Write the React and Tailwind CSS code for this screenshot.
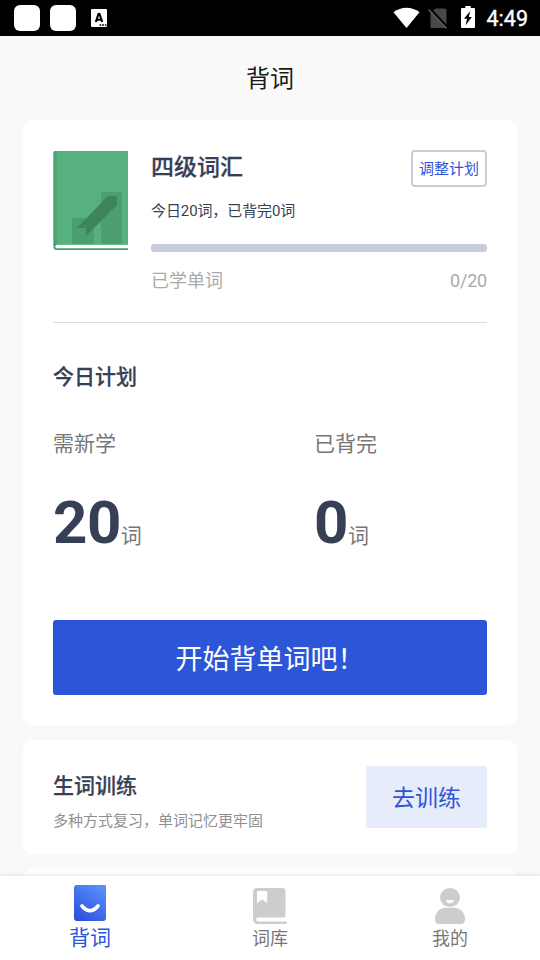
import React from "react";

function StatusBar() {
  return (
    <div className="flex h-9 shrink-0 items-center justify-between bg-black pl-[14px] pr-3">
      <div className="flex items-center">
        <div className="h-[26px] w-[26px] rounded-[6px] bg-white" />
        <div className="ml-[10px] h-[26px] w-[26px] rounded-[6px] bg-white" />
        <svg className="ml-[15px]" width="16" height="18" viewBox="0 0 16 18">
          <rect width="16" height="18" rx="1" fill="#fff" />
          <path d="M4.800 13 7.500 5h1l2.700 8M5.500 10.700h5" fill="none" stroke="#000" strokeWidth="2.100" />
          <path d="M8.500 16h7" stroke="#000" strokeWidth="1.600" strokeDasharray="1.8 .9" />
        </svg>
      </div>
      <div className="flex items-center">
        <svg width="28" height="22" viewBox="0 0 28 22">
          <path d="M.5 5.300C8-.8 19-.8 26.500 5.300L13.500 21Z" fill="#fff" />
        </svg>
        <svg className="ml-[7px]" width="20" height="22" viewBox="0 0 20 22">
          <path d="M8 1.500h9q1.500 0 1.500 1.500v16.500q0 1.500-1.500 1.500H4q-1.500 0-1.500-1.500V5Z" fill="#484848" />
          <path d="M1.500 1 20 20.500" stroke="#000" strokeWidth="2" />
          <path d="M.5 2.500 18.500 21.500" stroke="#5a5a5a" strokeWidth="1.500" />
        </svg>
        <svg className="mb-[2px] ml-[13px]" width="14" height="22" viewBox="0 0 14 22">
          <path d="M4.300 0h5.400v2H13q1 0 1 1v18q0 1-1 1H1q-1 0-1-1V3q0-1 1-1h3.300Z" fill="#fff" />
          <path d="M9.200 5 3 12.800h3L4.600 19.300l6.300-8.200H7.800Z" fill="#000" />
        </svg>
        <span className="ml-[12px] mt-[2px] text-[21.500px] leading-6 text-white [-webkit-text-stroke:0.35px]">4:49</span>
      </div>
    </div>
  );
}

function BookCover() {
  return (
    <svg className="mt-[1px] shrink-0" width="75" height="99" viewBox="0 0 75 99">
      <path d="M2 0h73v94H.5V2Q.5 0 2 0Z" fill="#57b17e" />
      <path d="M2 0h2v94H.5V2Q.5 0 2 0Z" fill="#4da473" />
      <path d="M19 67h22v27H19ZM48 41h21v53H48Z" fill="#4b9e6e" />
      <path d="M24 77 55 45h9v9L33 85v-8Z" fill="#3c8459" />
      <path d="M.5 93H75v6H3.500q-3 0-3-3Z" fill="#459f6d" />
      <path d="M4 93.800h71v3.400H4q-1.700 0-1.700-1.700T4 93.800Z" fill="#fff" />
    </svg>
  );
}

function Count({ label, value, className }) {
  return (
    <div className={className}>
      <div className="text-[21px] leading-[30px] text-[#777]">{label}</div>
      <div className="mt-[29px] flex h-[70px] items-baseline">
        <span className="text-[60px] font-bold leading-[70px] tracking-[-0.5px] text-[#373f56]">{value}</span>
        <span className="text-[21px] leading-[30px] text-[#777]">词</span>
      </div>
    </div>
  );
}

function WordsIcon() {
  return (
    <svg width="32" height="36" viewBox="0 0 32 36">
      <defs>
        <linearGradient id="words" x1=".8" y1="0" x2=".2" y2="1">
          <stop stopColor="#5790fa" />
          <stop offset="1" stopColor="#2e50df" />
        </linearGradient>
      </defs>
      <path d="M3 0h28q1 0 1 1v32q0 3-3 3H3q-3 0-3-3V3q0-3 3-3Z" fill="url(#words)" />
      <path d="M8 21q8 9.500 16 0" fill="none" stroke="#fff" strokeWidth="3.600" strokeLinecap="round" />
    </svg>
  );
}

function LibraryIcon() {
  return (
    <svg width="34" height="36" viewBox="0 0 34 36">
      <path d="M4 0h26q2.500 0 2.500 2.500V27q0 2.500-2.500 2.500H5q-2 0-2 2t2 2h27.500q1.500 0 1.500 1.200T32.500 36H5q-5 0-5-5V4q0-4 4-4Z" fill="#cdcdcd" />
      <path d="M5 3h8q1.200 0 1.200 1.200V15L9.200 11.500 4 15V4q0-1 1-1Z" fill="#fff" />
    </svg>
  );
}

function ProfileIcon() {
  return (
    <svg width="30" height="36" viewBox="0 0 30 36">
      <path d="M11 19.700h8C26 19.700 30 25 30 31.500q0 4.500-4.500 4.500h-21Q0 36 0 31.500C0 25 4 19.700 11 19.700Z" fill="#cdcdcd" />
      <ellipse cx="15" cy="9.500" rx="10" ry="9.500" fill="#cdcdcd" />
      <path d="M11 12h8q-.5 3.300-4 3.300T11 12Z" fill="#fff" />
    </svg>
  );
}

export default function App() {
  return (
    <div className="flex h-[960px] w-[540px] flex-col overflow-hidden bg-[#f9f9f9] font-[Roboto,'Noto_Sans_CJK_SC',sans-serif]">
      <StatusBar />
      <header className="flex h-[84px] shrink-0 items-center justify-center pt-[2px] text-2xl text-[#1a1a1a]">
        背词
      </header>

      <main className="flex min-h-0 flex-1 flex-col gap-[15px] overflow-hidden px-[23px]">
        <section className="h-[605px] shrink-0 rounded-[9px] bg-white p-[30px]">
          <div className="flex h-[173px] gap-[23px] border-b border-[#dcdcdc]">
            <BookCover />
            <div className="flex-1">
              <div className="flex h-[37px] items-start justify-between">
                <h2 className="pt-px text-[23px] font-medium leading-[34px] text-[#373f56] [-webkit-text-stroke:0.25px]">四级词汇</h2>
                <button className="h-[37px] w-[76px] rounded-[4px] border-2 border-[#c8cddb] pt-px text-[15px] leading-[32px] text-[#2e55d8]">
                  调整计划
                </button>
              </div>
              <p className="mt-[13px] text-[15px] leading-[22px] tracking-[-0.1px] text-[#373f56]">今日20词，已背完0词</p>
              <div className="mt-[22px] h-2 rounded-[3px] bg-[#c8ced9]" />
              <div className="mt-[16px] flex justify-between text-lg leading-[26px] text-[#aaa]">
                <span>已学单词</span>
                <span className="tracking-[-0.2px]">0/20</span>
              </div>
            </div>
          </div>
          <h3 className="mt-[39px] text-[21px] font-medium leading-[30px] text-[#373f56] [-webkit-text-stroke:0.25px]">今日计划</h3>
          <div className="mt-[37px] flex">
            <Count className="w-[261px]" label="需新学" value="20" />
            <Count label="已背完" value="0" />
          </div>
          <button className="mt-[62px] h-[75px] w-full rounded-[3px] bg-[#2d55d8] pt-[5px] text-[27px] text-white">
            开始背单词吧！
          </button>
        </section>

        <section className="flex h-[114px] shrink-0 items-center justify-between rounded-[9px] bg-white px-[30px]">
          <div className="pt-2">
            <h3 className="text-[21px] font-medium leading-[30px] text-[#373f56] [-webkit-text-stroke:0.25px]">生词训练</h3>
            <p className="mt-[9px] text-[15px] leading-[22px] text-[#909090]">多种方式复习，单词记忆更牢固</p>
          </div>
          <button className="h-[62px] w-[121px] rounded-[3px] bg-[#e6ecfa] pt-[4px] text-[23px] text-[#2e55d8]">
            去训练
          </button>
        </section>

        <section className="h-[114px] shrink-0 rounded-[9px] bg-white" />
      </main>

      <nav className="z-10 grid h-[84px] shrink-0 grid-cols-3 bg-white shadow-[0_-1px_4px_rgba(0,0,0,0.1)]">
        <div className="flex flex-col items-center pt-[9px] text-[21px] leading-[30px] text-[#2e55d8]">
          <WordsIcon />
          <span className="mt-[2px]">背词</span>
        </div>
        <div className="flex flex-col items-center pt-3 text-lg leading-[26px] text-[#777]">
          <LibraryIcon />
          <span className="mt-[2px]">词库</span>
        </div>
        <div className="flex flex-col items-center pt-3 text-lg leading-[26px] text-[#777]">
          <ProfileIcon />
          <span className="mt-[2px]">我的</span>
        </div>
      </nav>
    </div>
  );
}
